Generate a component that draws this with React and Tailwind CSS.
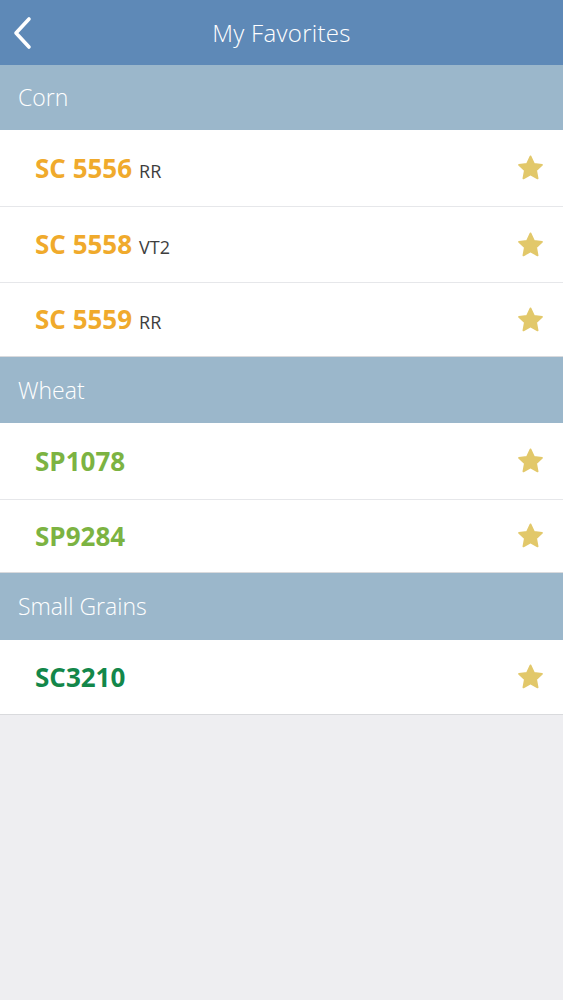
import React from "react";

const Star = () => (
  <svg width="27" height="26" viewBox="0 0 24 23" className="shrink-0">
    <path
      d="M12 1.2l3.1 6.6 7.1.9-5.2 4.9 1.3 7.1L12 17.3l-6.3 3.4 1.3-7.1-5.2-4.9 7.1-.9z"
      fill="#e2c86a"
      stroke="#e2c86a"
      strokeWidth="1.6"
      strokeLinejoin="round"
    />
  </svg>
);

const sections = [
  {
    title: "Corn",
    head: "h-[65px]",
    items: [
      { name: "SC 5556", suffix: "RR", color: "text-[#f0aa2c]", h: "h-[77px]" },
      { name: "SC 5558", suffix: "VT2", color: "text-[#f0aa2c]", h: "h-[76px]" },
      { name: "SC 5559", suffix: "RR", color: "text-[#f0aa2c]", h: "h-[74px]" },
    ],
  },
  {
    title: "Wheat",
    head: "h-[66px]",
    items: [
      { name: "SP1078", color: "text-[#7cb342]", h: "h-[77px]" },
      { name: "SP9284", color: "text-[#7cb342]", h: "h-[73px]" },
    ],
  },
  {
    title: "Small Grains",
    head: "h-[67px]",
    items: [{ name: "SC3210", color: "text-[#13874a]", h: "h-[75px]" }],
  },
];

export default function App() {
  return (
    <div className="w-[563px] min-h-[1000px] bg-[#eeeef1] font-['Liberation_Sans',sans-serif]">
      <div className="relative h-[65px] bg-[#5e89b7] flex items-center justify-center">
        <svg
          width="22"
          height="34"
          viewBox="0 0 22 34"
          className="absolute left-[11px] top-[16px]"
        >
          <path
            d="M18 3L5 17l13 14"
            fill="none"
            stroke="#ffffff"
            strokeWidth="3.6"
            strokeLinecap="round"
            strokeLinejoin="round"
          />
        </svg>
        <span className="text-white text-[24px] font-['Open_Sans',sans-serif] font-light tracking-[0.3px]">
          My Favorites
        </span>
      </div>
      {sections.map((s) => (
        <div key={s.title}>
          <div className={`${s.head} bg-[#9bb7cb] flex items-center pl-[18px]`}>
            <span className="text-white text-[23px] font-['Open_Sans',sans-serif] font-light">
              {s.title}
            </span>
          </div>
          {s.items.map((it, i) => (
            <div
              key={it.name}
              className={`${it.h} bg-white flex items-center pl-[35px] pr-[19px] border-b ${
                i === s.items.length - 1 ? "border-[#d9dadd]" : "border-[#e6e7ea]"
              }`}
            >
              <div className="flex-1 flex items-baseline gap-[7px] font-['Open_Sans',sans-serif]">
                <span className={`${it.color} text-[26px] font-bold`}>{it.name}</span>
                {it.suffix && (
                  <span className="text-[#3e3e3e] text-[18px]">{it.suffix}</span>
                )}
              </div>
              <Star />
            </div>
          ))}
        </div>
      ))}
    </div>
  );
}
